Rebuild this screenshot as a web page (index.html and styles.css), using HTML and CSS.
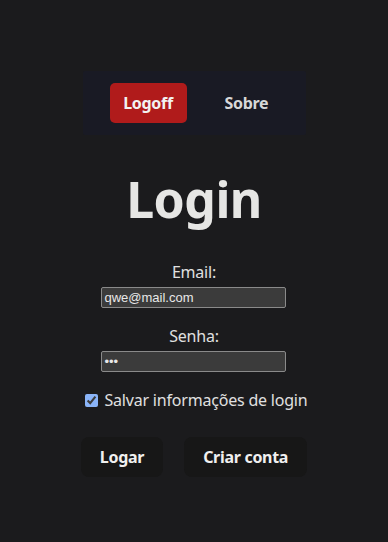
FILE: index.html
```html
<!DOCTYPE html>
<html lang="pt">

<head>
    <meta charset="UTF-8">
    <meta name="viewport" content="width=device-width, initial-scale=1.0">
    <title>Login</title>
    <link rel="stylesheet" href="styles.css">
</head>

<body>
    <div class="main">
        <nav class="nav">
            <button class="nav-btn nav-btn-active">Logoff</button>
            <button class="nav-btn">Sobre</button>
        </nav>

        <h1 class="title">Login</h1>

        <form class="form">
            <label for="email" class="label">Email:</label>
            <input class="input" type="text" id="email" value="qwe@mail.com">

            <label for="senha" class="label">Senha:</label>
            <input class="input" type="password" id="senha" value="qwe">

            <div class="check">
                <input type="checkbox" id="salvar" checked>
                <label for="salvar">Salvar informações de login</label>
            </div>

            <div class="buttons">
                <button type="button" class="btn">Logar</button>
                <button type="button" class="btn">Criar conta</button>
            </div>
        </form>
    </div>
</body>

</html>
```

FILE: styles.css
```css
* {
    margin: 0;
    padding: 0;
    box-sizing: border-box;
}

body {
    background-color: #1b1b1d;
    color: #e8e8e8;
    font-family: "Noto Sans", "Open Sans", sans-serif;
}

.main {
    display: flex;
    flex-direction: column;
    align-items: center;
    padding-top: 71px;
}

.nav {
    width: 223px;
    height: 64px;
    background-color: #191a24;
    display: flex;
    align-items: center;
    padding-left: 27px;
    gap: 25px;
    border-radius: 2px;
}

.nav-btn {
    height: 40px;
    padding: 0 13px;
    border: none;
    border-radius: 5px;
    background: none;
    color: #d8d8d8;
    font-family: inherit;
    font-size: 16px;
    font-weight: bold;
    letter-spacing: -0.3px;
    cursor: pointer;
}

.nav-btn-active {
    width: 77px;
    background-color: #b01b1b;
    color: #f2f2f2;
}

.title {
    margin-top: 34px;
    font-size: 50px;
    font-weight: bold;
    line-height: 60px;
    color: #e6e6e4;
    letter-spacing: -0.5px;
}

.form {
    margin-top: 32px;
    display: flex;
    flex-direction: column;
    align-items: center;
}

.label {
    font-size: 16px;
    line-height: 22px;
    color: #e0e0e0;
    margin-bottom: 4px;
    letter-spacing: -0.2px;
}

.input {
    width: 185px;
    height: 21px;
    padding: 0 2px;
    background-color: #3b3b3b;
    border: 1px solid #8a8a8a;
    border-radius: 2px;
    color: #e8e8e8;
    font-family: "Liberation Sans", Arial, sans-serif;
    font-size: 13px;
    margin-bottom: 17px;
}

.check {
    display: flex;
    align-items: center;
    gap: 6px;
    margin-top: 0;
    font-size: 16px;
    color: #e0e0e0;
    letter-spacing: -0.2px;
    margin-left: 5px;
}

.check input {
    width: 13px;
    height: 13px;
    accent-color: #8ab4f8;
}

.buttons {
    display: flex;
    gap: 21px;
    margin-top: 26px;
}

.btn {
    height: 40px;
    padding: 0 19px;
    border: none;
    border-radius: 8px;
    background-color: #171717;
    color: #f0f0f0;
    font-family: inherit;
    font-size: 16px;
    font-weight: bold;
    letter-spacing: -0.3px;
    cursor: pointer;
}
```
